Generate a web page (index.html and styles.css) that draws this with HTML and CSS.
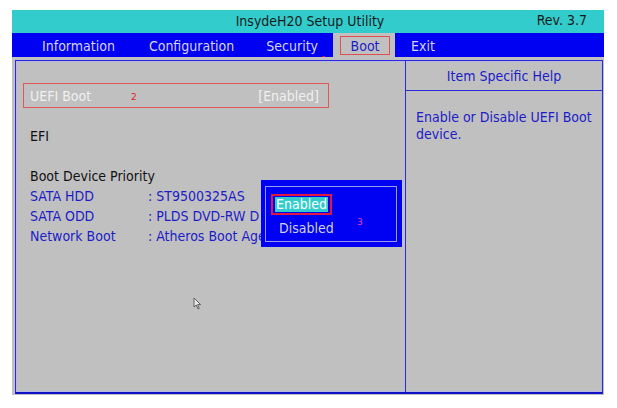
FILE: index.html
```html
<!DOCTYPE html>
<html>
<head>
<meta charset="utf-8">
<link rel="stylesheet" href="styles.css">
</head>
<body>
<div class="screen">
  <div class="titlebar">
    <span class="title">InsydeH20 Setup Utility</span>
    <span class="rev">Rev. 3.7</span>
  </div>
  <div class="menu">
    <span class="mi mi-info">Information</span>
    <span class="mi mi-conf">Configuration</span>
    <span class="mi mi-sec">Security</span>
    <span class="mi mi-boot"><span class="boot-box">Boot</span></span>
    <span class="mi mi-exit">Exit</span>
    <span class="mark mark1">1</span>
  </div>
  <div class="main">
    <div class="frame">
      <div class="left">
        <div class="uefi-row">
          <span class="uefi-label">UEFI Boot</span>
          <span class="mark mark2">2</span>
          <span class="uefi-val">[Enabled]</span>
        </div>
        <div class="efi">EFI</div>
        <div class="bdp">Boot Device Priority</div>
        <div class="dev"><span class="dev-l">SATA HDD</span><span class="dev-v">: ST9500325AS</span></div>
        <div class="dev"><span class="dev-l">SATA ODD</span><span class="dev-v">: PLDS DVD-RW D</span></div>
        <div class="dev"><span class="dev-l">Network Boot</span><span class="dev-v">: Atheros Boot Age</span></div>
      </div>
      <div class="right">
        <div class="help-head">Item Specific Help</div>
        <div class="help-text">Enable or Disable UEFI Boot device.</div>
      </div>
    </div>
    <div class="popup">
      <div class="popup-in">
        <div class="opt-sel"><span class="opt-hl">Enabled</span></div>
        <div class="opt">Disabled</div>
        <span class="mark mark3">3</span>
      </div>
    </div>
    <svg class="cursor" width="9" height="13" viewBox="0 0 9 13">
      <path d="M1 1 L1 10 L3.2 8 L5 12 L6.3 11.4 L4.6 7.6 L7.6 7.6 Z" fill="#e8e8e8" stroke="#555" stroke-width="0.9"/>
    </svg>
  </div>
</div>
</body>
</html>
```

FILE: styles.css
```css
html, body {
  margin: 0;
  padding: 0;
  background: #ffffff;
}
body {
  font-family: "DejaVu Sans Condensed", "DejaVu Sans", Tahoma, sans-serif;
  font-size: 14px;
}
.screen {
  margin: 10px 0 0 12px;
  width: 592px;
  height: 385px;
  display: flex;
  flex-direction: column;
}
.titlebar {
  height: 23px;
  background: #33cccc;
  position: relative;
  display: flex;
  align-items: center;
  justify-content: center;
  color: #1a1a1a;
  font-size: 14px;
}
.title {
  padding-left: 4px;
  margin-top: -1px;
}
.rev {
  position: absolute;
  right: 17px;
  top: 2px;
}
.menu {
  height: 24px;
  background: #0000f2;
  display: flex;
  align-items: stretch;
  color: #d4d4e4;
  font-size: 14px;
  position: relative;
}
.mi {
  display: flex;
  align-items: center;
  padding-top: 1px;
}
.mi-info { margin-left: 30px; }
.mi-conf { margin-left: 34px; }
.mi-sec { margin-left: 32px; }
.mi-boot {
  margin-left: 15px;
  background: #c0c0c0;
  width: 62px;
  justify-content: center;
  padding-top: 0;
}
.boot-box {
  border: 1.5px solid #e05050;
  color: #1c1cc8;
  width: 48px;
  height: 17px;
  display: flex;
  align-items: center;
  justify-content: center;
  margin-left: 2px;
  margin-top: 1px;
}
.mi-exit { margin-left: 16px; }
.mark {
  position: absolute;
  color: #e02020;
  font-size: 9px;
  font-family: "DejaVu Sans", sans-serif;
}
.mark1 { left: 309px; top: 22px; }
.main {
  flex: 1;
  background: #c0c0c0;
  position: relative;
  padding: 3px 1px 1px 3px;
  display: flex;
}
.frame {
  flex: 1;
  border: 1px solid #2a2ad8;
  border-bottom: 2px solid #1010c8;
  box-shadow: inset 0 0 0 1px #b8b8e8;
  display: flex;
}
.left {
  width: 390px;
  border-right: 1px solid #2a2ad8;
  padding: 22px 0 0 7px;
  box-sizing: border-box;
  display: flex;
  flex-direction: column;
}
.uefi-row {
  width: 306px;
  height: 25px;
  box-sizing: border-box;
  border: 1px solid #e05858;
  display: flex;
  align-items: center;
  padding: 0 9px 0 6px;
  color: #f0f0f0;
  position: relative;
}
.uefi-label { flex: 0 0 auto; }
.uefi-val { margin-left: auto; }
.mark2 { position: absolute; left: 107px; top: 8px; }
.efi {
  margin-top: 20px;
  padding-left: 7px;
  color: #111;
}
.bdp {
  margin-top: 24px;
  margin-bottom: 2px;
  padding-left: 7px;
  color: #111;
}
.dev {
  padding-left: 7px;
  height: 20px;
  line-height: 20px;
  color: #1c1cc8;
  display: flex;
  white-space: nowrap;
}
.dev-l { width: 118px; }
.right {
  flex: 1;
  display: flex;
  flex-direction: column;
}
.help-head {
  height: 29px;
  border-bottom: 1px solid #2a2ad8;
  display: flex;
  align-items: center;
  justify-content: center;
  color: #1c1cc8;
}
.help-text {
  padding: 18px 4px 0 10px;
  color: #1c1cc8;
  line-height: 17px;
}
.popup {
  position: absolute;
  left: 249px;
  top: 123px;
  width: 141px;
  height: 67px;
  background: #0000f2;
  padding: 6px 5px 5px 4px;
  box-sizing: border-box;
}
.popup-in {
  height: 100%;
  border: 1px solid #9a9af0;
  position: relative;
  padding: 7px 0 0 5px;
  box-sizing: border-box;
}
.opt-sel {
  display: inline-block;
  border: 2px solid #e01840;
  padding: 1px 2px;
  line-height: 15px;
}
.opt-hl {
  background: #33cccc;
  color: #ffffff;
  padding: 0 1px;
  display: inline-block;
}
.opt {
  color: #d0d0e8;
  padding-left: 8px;
  margin-top: 5px;
}
.mark3 { left: 91px; top: 30px; color: #e040c0; }
.cursor {
  position: absolute;
  left: 181px;
  top: 240px;
}
```
